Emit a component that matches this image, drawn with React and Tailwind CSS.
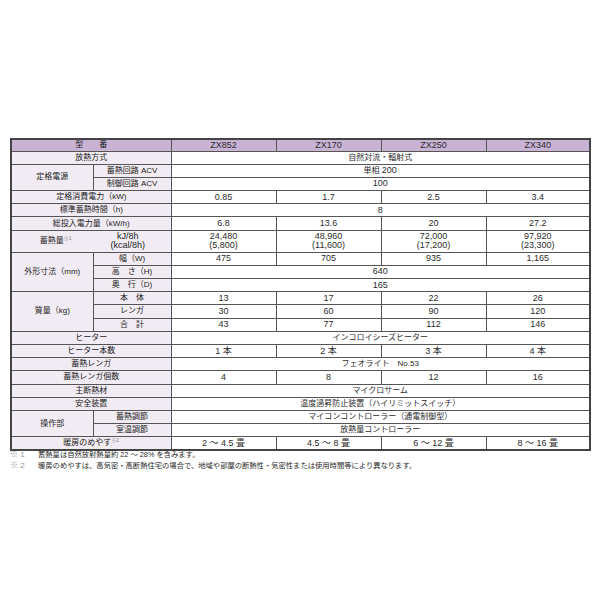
const jp = { fontFamily: '"Liberation Sans", "Noto Sans CJK JP", sans-serif' };

// label cell classes
const lab = "border border-[#555] bg-[#f1ecf3] text-[8px] text-[#222] p-0 text-center whitespace-nowrap";
const val = "border border-[#555] bg-white text-[9px] text-[#2b2b2b] p-0 text-center whitespace-nowrap";
const valJp = "border border-[#555] bg-white text-[8px] text-[#2b2b2b] p-0 text-center whitespace-nowrap";

function Sup({ children }) {
  return <span className="text-[5px] text-[#888] align-top relative top-[-1px]">{children}</span>;
}

function Row({ label, sub, values, span, jpText }) {
  return (
    <tr className="h-[13.2px]">
      {label !== undefined && sub === undefined && (
        <td colSpan={2} className={lab}>{label}</td>
      )}
      {sub !== undefined && <td className={lab}>{sub}</td>}
      {span ? (
        <td colSpan={4} className={jpText ? valJp : val}>{values}</td>
      ) : (
        values.map((v, i) => (
          <td key={i} className={val}>{v}</td>
        ))
      )}
    </tr>
  );
}

export default function App() {
  return (
    <div className="bg-white w-[600px] h-[600px] pt-[138px] pl-[10px]" style={jp}>
      <table className="table-fixed border-collapse border-2 border-[#444] w-[579px] leading-none">
        <colgroup>
          <col className="w-[82px]" />
          <col className="w-[78px]" />
          <col className="w-[105px]" />
          <col className="w-[105px]" />
          <col className="w-[105px]" />
          <col className="w-[104px]" />
        </colgroup>
        <tbody>
          <tr className="h-[12px]">
            <td colSpan={2} className="border border-[#555] bg-[#c8b3d5] text-[8px] text-[#222] text-center p-0">
              型　　番
            </td>
            {["ZX852", "ZX170", "ZX250", "ZX340"].map((m) => (
              <td key={m} className="border border-[#555] bg-[#c8b3d5] text-[9px] text-[#2b2b2b] text-center p-0">
                {m}
              </td>
            ))}
          </tr>
          <Row label="放熱方式" values="自然対流・輻射式" span jpText />
          <tr className="h-[13.2px]">
            <td rowSpan={2} className={lab}>定格電源</td>
            <td className={lab}>蓄熱回路 ACV</td>
            <td colSpan={4} className={valJp}>
              単相 <span className="text-[9px]">200</span>
            </td>
          </tr>
          <Row sub="制御回路 ACV" values="100" span />
          <Row label="定格消費電力（kW)" values={["0.85", "1.7", "2.5", "3.4"]} />
          <Row label="標準蓄熱時間（h)" values="8" span />
          <Row label="総投入電力量（kW/h)" values={["6.8", "13.6", "20", "27.2"]} />
          <tr className="h-[22px]">
            <td colSpan={2} className={lab}>
              <div className="flex items-center">
                <div className="w-[82px] flex justify-center pl-[6px]">
                  蓄熱量<Sup>※1</Sup>
                </div>
                <div className="w-[78px] flex flex-col items-center leading-[9px] text-[9px] pr-[8px]">
                  <span>kJ/8h</span>
                  <span>(kcal/8h)</span>
                </div>
              </div>
            </td>
            {[
              ["24,480", "(5,800)"],
              ["48,960", "(11,600)"],
              ["72,000", "(17,200)"],
              ["97,920", "(23,300)"],
            ].map(([a, b]) => (
              <td key={a} className={val + " leading-[9px]"}>
                {a}
                <br />
                {b}
              </td>
            ))}
          </tr>
          <tr className="h-[13.2px]">
            <td rowSpan={3} className={lab}>外形寸法（mm)</td>
            <td className={lab}>幅（W)</td>
            {["475", "705", "935", "1,165"].map((v) => (
              <td key={v} className={val}>{v}</td>
            ))}
          </tr>
          <Row sub="高　さ（H)" values="640" span />
          <Row sub="奥　行（D)" values="165" span />
          <tr className="h-[13.2px]">
            <td rowSpan={3} className={lab}>質量（kg)</td>
            <td className={lab}>本　体</td>
            {["13", "17", "22", "26"].map((v) => (
              <td key={v} className={val}>{v}</td>
            ))}
          </tr>
          <Row sub="レンガ" values={["30", "60", "90", "120"]} />
          <Row sub="合　計" values={["43", "77", "112", "146"]} />
          <Row label="ヒーター" values="インコロイシーズヒーター" span jpText />
          <Row label="ヒーター本数" values={["1 本", "2 本", "3 本", "4 本"]} />
          <Row label="蓄熱レンガ" values="フェオライト　No.53" span jpText />
          <Row label="蓄熱レンガ個数" values={["4", "8", "12", "16"]} />
          <Row label="主断熱材" values="マイクロサーム" span jpText />
          <Row label="安全装置" values="温度過昇防止装置（ハイリミットスイッチ）" span jpText />
          <tr className="h-[13.2px]">
            <td rowSpan={2} className={lab}>操作部</td>
            <td className={lab}>蓄熱調節</td>
            <td colSpan={4} className={valJp}>マイコンコントローラー（通電制御型）</td>
          </tr>
          <Row sub="室温調節" values="放熱量コントローラー" span jpText />
          <tr className="h-[13.2px]">
            <td colSpan={2} className={lab}>
              暖房のめやす<Sup>※2</Sup>
            </td>
            {["2 ～ 4.5 畳", "4.5 ～ 8 畳", "6 ～ 12 畳", "8 ～ 16 畳"].map((v) => (
              <td key={v} className={val}>{v}</td>
            ))}
          </tr>
        </tbody>
      </table>
      <div className="mt-[-2px] text-[7.3px] text-[#2b2b2b] leading-[11px]">
        <div className="flex">
          <span className="w-[28px] text-[#999] text-[8px]">※ 1</span>
          <span>蓄熱量は自然放射熱量約 22 ～ 28% を含みます。</span>
        </div>
        <div className="flex">
          <span className="w-[28px] text-[#999] text-[8px]">※ 2</span>
          <span>暖房のめやすは、高気密・高断熱住宅の場合で、地域や部屋の断熱性・気密性または使用時間等により異なります。</span>
        </div>
      </div>
    </div>
  );
}
